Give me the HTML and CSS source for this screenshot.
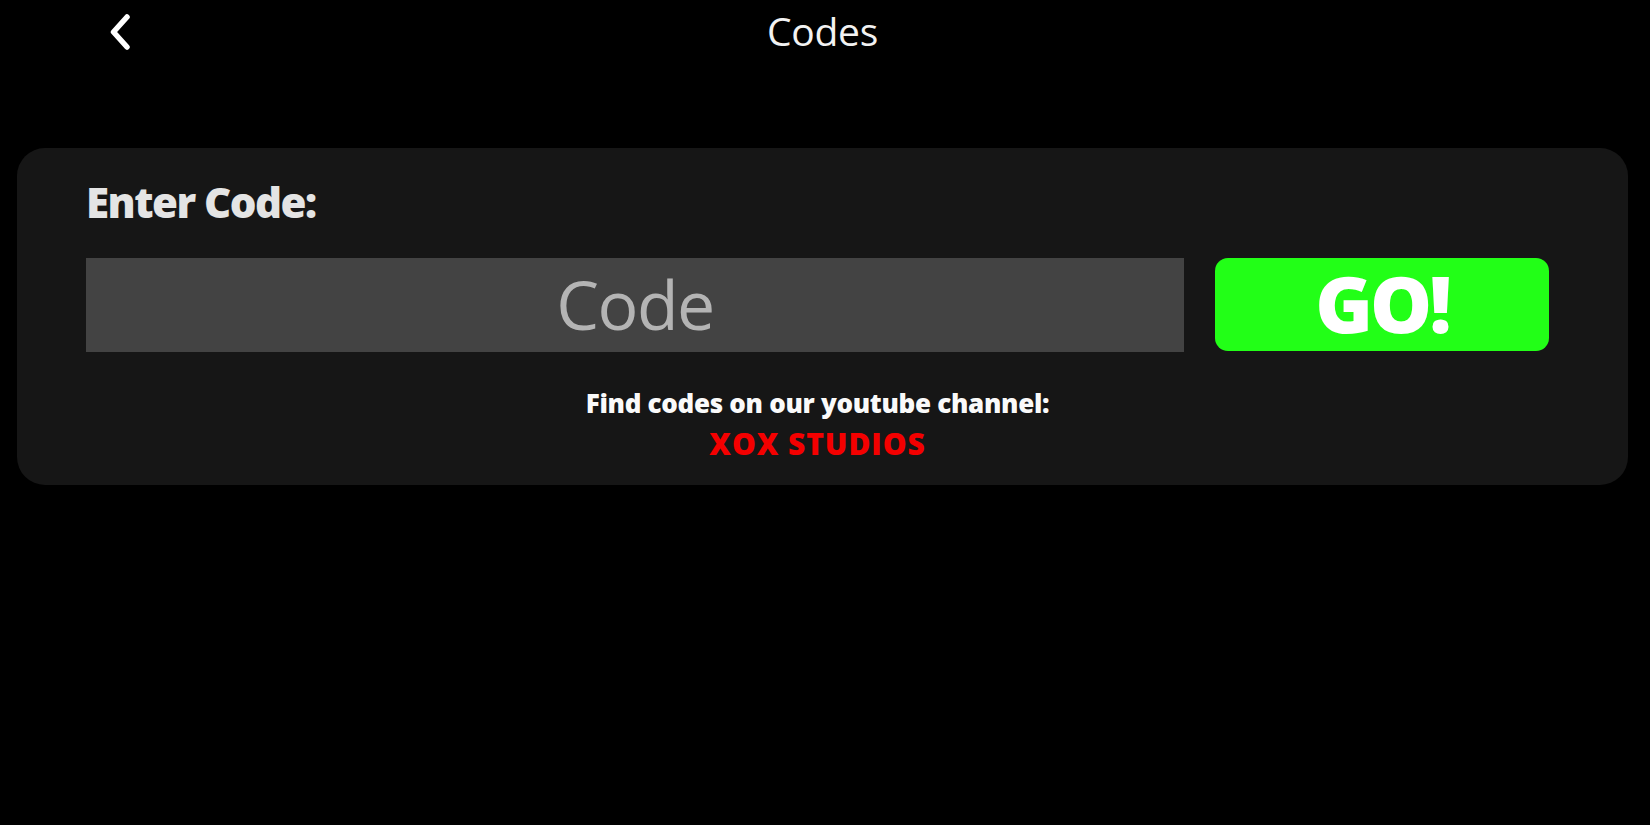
FILE: index.html
```html
<!DOCTYPE html>
<html lang="en">
<head>
<meta charset="utf-8">
<title>Codes</title>
<link rel="stylesheet" href="styles.css">
</head>
<body>
<header class="topbar">
  <button class="back" aria-label="Back">
    <svg width="24" height="40" viewBox="0 0 24 40" aria-hidden="true">
      <path d="M20 5 L6.5 20 L20 35" fill="none" stroke="#fff" stroke-width="5.5" stroke-linecap="round" stroke-linejoin="round"/>
    </svg>
  </button>
  <h1 class="title">Codes</h1>
  <span class="spacer"></span>
</header>
<main class="panel">
  <h2 class="label">Enter Code:</h2>
  <div class="row">
    <div class="code-field">Code</div>
    <button class="go">GO!</button>
  </div>
  <p class="hint">Find codes on our youtube channel:</p>
  <p class="channel">XOX STUDIOS</p>
</main>
</body>
</html>
```

FILE: styles.css
```css
html, body {
  margin: 0;
  padding: 0;
  background: #000;
  width: 1650px;
  height: 825px;
  overflow: hidden;
}

body {
  font-family: "Open Sans", "Noto Sans", sans-serif;
  color: #fff;
}

.topbar {
  display: grid;
  grid-template-columns: 200px 1fr 200px;
  align-items: center;
  height: 61px;
}

.back {
  background: none;
  border: 0;
  padding: 0;
  margin: 2px 0 0 107px;
  width: 24px;
  height: 40px;
  display: flex;
  align-items: center;
  justify-content: center;
  cursor: pointer;
}

.back svg {
  display: block;
  filter: blur(0.6px);
}

.title {
  margin: 0 5px 0 0;
  text-align: center;
  font-weight: 400;
  font-size: 39px;
  line-height: 53px;
  color: #f2f2f2;
  letter-spacing: -0.3px;
}

.panel {
  margin: 87px 22px 0 17px;
  height: 337px;
  box-sizing: border-box;
  background: #161616;
  border-radius: 28px;
  padding: 33px 79px 0 69px;
}

.label {
  margin: 0;
  font-weight: 800;
  font-size: 42px;
  line-height: 42px;
  letter-spacing: -1.5px;
  color: #e4e4e4;
}

.row {
  display: grid;
  grid-template-columns: 1fr 334px;
  grid-template-rows: 94px;
  column-gap: 31px;
  margin-top: 35px;
}

.code-field {
  background: #434343;
  display: flex;
  align-items: center;
  justify-content: center;
  font-size: 68px;
  line-height: 1.1;
  letter-spacing: -1.5px;
  color: #b4b4b4;
  font-weight: 400;
  padding-bottom: 2px;
  box-sizing: border-box;
}

.go {
  background: #22ff17;
  border: 0;
  border-radius: 13px;
  font-family: "Open Sans", "Noto Sans", sans-serif;
  font-weight: 800;
  font-size: 78px;
  line-height: 1.1;
  letter-spacing: -3px;
  color: #fff;
  display: flex;
  align-items: center;
  justify-content: center;
  padding: 0 0 2px;
  box-sizing: border-box;
  height: 93px;
  cursor: pointer;
}

.hint {
  margin: 33px 0 0;
  text-align: center;
  font-weight: 800;
  font-size: 26px;
  line-height: 36px;
  color: #fafafa;
  letter-spacing: -0.3px;
}

.channel {
  margin: 5px 0 0;
  text-align: center;
  font-weight: 800;
  font-size: 30px;
  line-height: 36px;
  color: #f40000;
  letter-spacing: 0.9px;
}
```
